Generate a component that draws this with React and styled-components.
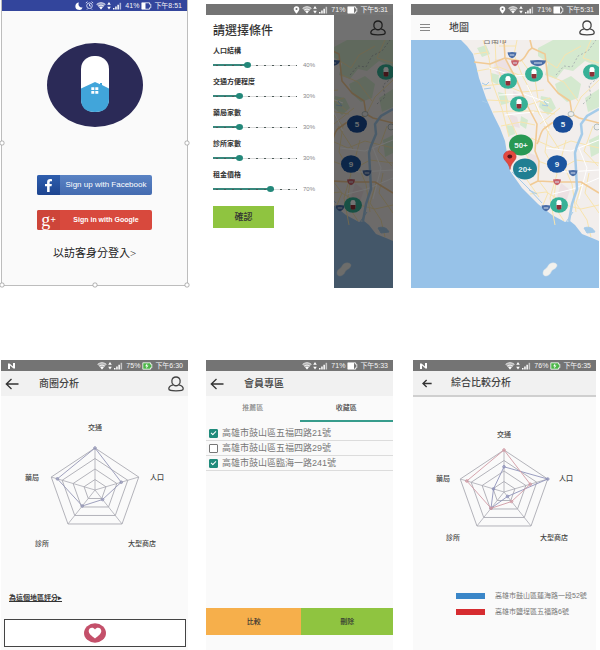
import React, { useState } from "react";
import styled, { createGlobalStyle } from "styled-components";
import { FaFacebookF } from "react-icons/fa";

const GlobalStyle = createGlobalStyle`
  *, *::before, *::after { box-sizing: border-box; }
  body {
    margin: 0;
    background: #fff;
    color: #333;
    font-family: "Liberation Sans", "Noto Sans CJK TC", sans-serif;
    font-size: 7px;
    line-height: 10px;
  }
  button, input { font: inherit; color: inherit; }
  button { margin: 0; padding: 0; border: 0; background: none; cursor: pointer; }
  svg { display: block; }
`;

const Board = styled.main`
  display: grid;
  grid-template-columns: minmax(0, 187fr) minmax(0, 187fr) minmax(0, 188fr);
  grid-template-rows: auto 1fr;
  gap: 72px 18px;
  min-height: 100vh;
  padding: 0 1px;
`;

const Screen = styled.section`
  display: flex;
  flex-direction: column;
  margin: ${(p) => p.$margin || "0"};
  background: #fafafa;
`;

const Bar = styled.div`
  display: flex;
  align-items: center;
  gap: 2px;
  height: 11px;
  padding: 0 5px 0 6px;
  background: ${(p) => p.$color || "#747474"};
  color: #f4f4f4;
  white-space: nowrap;
`;

const BarSpacer = styled.span`
  flex: 1;
`;

const Header = styled.header`
  display: grid;
  grid-template-columns: 38px 1fr auto;
  align-items: center;
  height: ${(p) => (p.$ruled ? "26px" : "25px")};
  padding-right: 4px;
  background: ${(p) => p.$color || "#f1f1f1"};
  border-bottom: ${(p) => (p.$ruled ? "2px solid #cfcfcf" : "0")};
`;

const Lead = styled.button`
  display: flex;
  padding-left: ${(p) => (p.$inset ? "9px" : "4px")};
`;

const Title = styled.h2`
  margin: 0;
  font-size: 10px;
  line-height: 14px;
  font-weight: 500;
  color: #444;
`;

const Body = styled.div`
  display: flex;
  flex-direction: column;
  flex: 1;
`;

/* Status bar */

const Moon = () => (
  <svg width="8" height="8" viewBox="0 0 8 8"><path d="M4 .5A3.7 3.7 0 1 0 7.6 5.400A3.300 3.300 0 0 1 4 .5Z" fill="#fff" /></svg>
);
const Alarm = () => (
  <svg width="9" height="9" viewBox="0 0 9 9" fill="none" stroke="#cfd6f2" strokeWidth="1">
    <circle cx="4.500" cy="4.700" r="2.800" /><path d="M4.500 3v2h1.500M.8 2 2.500.7M8.200 2 6.500.7M2 8.500l1-1M7 8.500l-1-1" />
  </svg>
);
const Place = () => (
  <svg width="7" height="8" viewBox="0 0 7 8"><path d="M3.500.3C1.700.3.7 1.500.7 3c0 1.800 2.800 4.700 2.800 4.700S6.300 4.800 6.300 3C6.300 1.500 5.300.3 3.500.3Zm0 1.800a1 1 0 1 1 0 2 1 1 0 0 1 0-2Z" fill="#fff" fillRule="evenodd" /></svg>
);
const Network = () => (
  <svg width="27" height="8" viewBox="0 0 27 8">
    <path d="M.5 2.400Q5 -1 9.500 2.400L5 7.600Z" fill="#fff" opacity=".45" />
    <path d="M.6 2.300Q5 -.9 9.400 2.300M2.200 4Q5 2 7.800 4" fill="none" stroke="#fff" strokeWidth=".8" />
    <path d="M3.300 5.300Q5 4.200 6.700 5.300L5 7.500Z" fill="#fff" />
    <path d="m13 0 1.800 2.800h-3.600ZM13 7.500l1.800-2.800h-3.600Z" fill="#fff" />
    <path d="M17 7.500V6h1.500v1.500ZM19.200 7.500v-3h1.500v3ZM21.400 7.500V2.700h1.500v4.800Z" fill="#fff" />
    <path d="M23.600 7.500V.8h1.500v6.700Z" fill="#fff" opacity=".6" />
  </svg>
);
const Battery = ({ charging, low }) => (
  <svg width="11" height="8" viewBox="0 0 11 8">
    <path d="M.8.800h7.700v1.400h1.300v3.600H8.500v1.400H.8Z" fill={charging ? "#4cb648" : "none"} stroke="#fff" strokeWidth=".8" />
    {charging ? <path d="m5.300 1.200-2.200 3h1.500l-.5 2.600 2.400-3.300H5Z" fill="#fff" /> : <path d={low ? "M1 1h3.500v6H1Z" : "M1 1h6v6H1Z"} fill="#fff" />}
  </svg>
);
const NLogo = () => (
  <svg width="9" height="8" viewBox="0 0 9 8"><path d="M1 7V1.500h1.500l3.500 3V1h2v5.500H6.500l-3.500-3V7Z" fill="#fff" /></svg>
);

function StatusBar({ level, time, color, brand, charging, low, children }) {
  return (
    <Bar $color={color}>
      {brand && <NLogo />}
      <BarSpacer />
      {children}
      <Network />
      <span>{level}</span>
      <Battery charging={charging} low={low} />
      <span>{time}</span>
    </Bar>
  );
}

/* Header icons */

const User = () => (
  <svg width="16" height="16" viewBox="0 0 16 16" fill="none" stroke="#444" strokeWidth="1.300">
    <path d="M5.400 8.700C3.900 7.300 3.600 5.700 3.900 4.300 4.300 2.200 5.900 1 8 1s3.700 1.200 4.100 3.300c.3 1.400 0 3-1.500 4.400C9 10 7 10 5.400 8.700Z" />
    <path d="M5.200 8.900C2.200 9.600.8 11 .8 12.800c0 1.700 1.700 2 7.200 2s7.200-.3 7.200-2c0-1.800-1.400-3.200-4.400-3.900" />
  </svg>
);
const Back = ({ small }) => (
  <svg width={small ? 10 : 14} height={small ? 9 : 12} viewBox="0 0 14 12" fill="none" stroke="#333" strokeWidth={small ? 1.900 : 1.300}>
    <path d="M13.500 6H1.500M6.500 1 1.300 6l5.200 5" />
  </svg>
);
const Menu = () => (
  <svg width="10" height="9" viewBox="0 0 10 9"><path d="M0 1.500h10M0 4.500h10M0 7.500h10" stroke="#888" strokeWidth="1" /></svg>
);

/* Login */

const LoginScreen = styled(Screen)`
  position: relative;
  border: 1px solid #bdbdbd;
  border-top: 0;
  align-self: start;
`;
const LoginBody = styled(Body)`
  align-items: center;
  padding: 32px 0 24px;
`;
const Handle = styled.span`
  position: absolute;
  width: 5px;
  height: 5px;
  border: 1px solid #aaa;
  border-radius: 2px;
  background: #fff;
  transform: translate(-50%, -50%);
  left: ${(p) => p.$x};
  top: ${(p) => p.$y};
`;
const LogoArt = styled.svg`
  margin-bottom: 48px;
`;
const SocialButton = styled.button`
  display: grid;
  grid-template-columns: 23px 1fr;
  align-items: stretch;
  width: 115px;
  height: 20px;
  margin-bottom: 15px;
  overflow: hidden;
  border-radius: 2px;
  background: ${(p) => p.$color};
  color: #fff;
  font-size: ${(p) => p.$size};
  font-weight: ${(p) => p.$weight || 400};
  line-height: 20px;
`;
const SocialMark = styled.span`
  display: flex;
  align-items: center;
  justify-content: center;
  background: ${(p) => p.$color};
  font-family: "Liberation Serif", serif;
  font-size: 18px;
  font-weight: 400;
  line-height: 14px;
`;
const MarkPlus = styled.small`
  font-size: 10px;
  font-weight: 700;
`;
const GuestLink = styled.a`
  color: #222;
  font-family: "Liberation Serif", "Noto Sans CJK TC", serif;
  font-size: 11px;
  line-height: 16px;
  text-decoration: none;
`;

function Login() {
  return (
    <LoginScreen>
      <StatusBar level="41%" time="下午8:51" color="#33459c" low><Moon /><Alarm /></StatusBar>
      <LoginBody>
        <LogoArt width="96" height="84" viewBox="0 0 96 84" role="img" aria-label="Logo">
          <ellipse cx="48" cy="42" rx="48" ry="42" fill="#2b2a57" />
          <rect x="34" y="13" width="28" height="56" rx="13" fill="#fff" />
          <path d="M34 45.500 48 39l5 2.200V40h2v2l7 3.500V56c0 9-5 13-14 13s-14-4-14-13Z" fill="#41a5da" />
          <path d="M44.300 44.300h3v2.700h-3Zm4 0h3v2.700h-3Zm-4 3.700h3v2.700h-3Zm4 0h3v2.700h-3Z" fill="#fff" />
        </LogoArt>
        <SocialButton type="button" $color="linear-gradient(#5a83c4, #446bb0)" $size="8px">
          <SocialMark $color="linear-gradient(#2f5fae, #1d448f)"><FaFacebookF size={13} /></SocialMark>
          <span>Sign up with Facebook</span>
        </SocialButton>
        <SocialButton type="button" $color="#d8493d" $size="7px" $weight="700">
          <SocialMark $color="#cd4539" aria-hidden="true">g<MarkPlus>+</MarkPlus></SocialMark>
          <span>Sign in with Google</span>
        </SocialButton>
        <GuestLink href="#guest">以訪客身分登入&gt;</GuestLink>
      </LoginBody>
      <Handle $x="0" $y="50%" />
      <Handle $x="100%" $y="50%" />
      <Handle $x="50%" $y="100%" />
      <Handle $x="0" $y="100%" />
      <Handle $x="100%" $y="100%" />
    </LoginScreen>
  );
}

/* Map */

const MapArt = styled.svg`
  width: 100%;
  height: auto;
  font-family: "Liberation Sans", "Noto Sans CJK TC", sans-serif;
`;

const Capsule = ({ x, y }) => (
  <g transform={`translate(${x} ${y})`}>
    <ellipse rx="9" ry="7.800" fill="#37b197" />
    <rect x="-2.500" y="-5" width="5" height="9.500" rx="2.300" fill="#fff" />
    <path d="M-2.500 0h5v2.200a2.400 2.400 0 0 1-5 0Z" fill="#8e3138" />
  </g>
);
const Cluster = ({ x, y, r, color, label }) => (
  <g transform={`translate(${x} ${y})`}>
    <ellipse rx={r} ry={r * 0.87} fill={color} />
    <text y="3" textAnchor="middle" fontSize="8" fontWeight="700" fill="#e8f3f5">{label}</text>
  </g>
);
const Shield = ({ x, y, w = 9, color = "#4a6ea8" }) => (
  <g transform={`translate(${x} ${y})`}>
    <path d={`M${-w / 2}-2.500Q0-3.500 ${w / 2}-2.500Q${w / 2 - 0.5} 2 0 3.200Q${-w / 2 + 0.5} 2 ${-w / 2}-2.500Z`} fill={color} />
    <path d={`M${-w / 4} 0H${w / 4}`} stroke="#d8e0ee" strokeWidth="1" />
  </g>
);

/* `east` shows only the strip of the map right of x = 129 */
function CityMap({ east }) {
  return (
    <MapArt viewBox={east ? "129 0 59 248" : "0 0 188 248"} role="img" aria-label="地圖">
      <rect width="188" height="248" fill="#97c2e8" />
      <path d="M50 0 56 6 62 14 65 25 68 38 75 58 82 74 89 88 94 101 96 113 99 131 111 148 127 164 141 175 154 182 159 181 164 185 171 194 181 198 188 201V0Z" fill="#f2eeec" />
      <g fill="#d4e9cf">
        <path d="M127 8 142 0h46v27l-14-6-12 10-9-2-8 10-11-4 3-12-10-7Z" />
        <path d="M144 44l16-8 10 8-3 14-11 4-9-8ZM130 56l10 2 5 10-8 7-9-8ZM174 58l14-9v18l-11 5ZM66 8l9-3 4 9-8 3ZM80 33l8 2-1 10-7-4ZM87 52l8 2 3 9-8 2ZM178 100l10-5v18l-8 4ZM110 76l7 4-2 9-6-4ZM95 85l8 1 1 8-6 2Z" />
      </g>
      <g fill="#ebdce0" opacity=".7"><path d="M84 19l12 1 6 12-10 7-9-9ZM102 51l11 5-1 12-9-5ZM116 112l10 4 3 11-9 5ZM98 74l8 3 3 11-8-2ZM150 143l9 7-4 12-9-5Z" /></g>
      <g fill="none" stroke="#f8e4ae" strokeWidth="1">
        <path d="M72 0l6 18 3 24 10 27 7 28M84 0l1 23 9 25 2 25 14 31 10 20M66 31l22-4 20 8 15 0M71 46l20-2 20 8 22-2M76 60l21 1 20 4 22-7M82 72l20-1 21 0 21 3M90 86l20-4 14 3M106 0l-3 15 8 20 8 15 9 24 10 12-4 26 12 22-7 24 5 27M111 21l13 18 3 20 15 12M132 19l14 9 8-13 16-9M137 35l16 7 14 19M120 98l23 10 17-7 28 7M127 121l22 8 16-9 23 3M128 141l9 12-5 12M145 142l-3 22 11 17M150 164l20 5 18-4M171 143l-6 20 11 17 4 17M182 86l-9 25 14 15M178 133l-4 20 14 20M133 86l15 23M149 68l-20 16M114 137l14 20M155 100l-5 19 11 25 4 28M88 6l17 0M63 14l14-2M119 154l16-2 19 11M188 40l-18 17-8 16M180 0l-8 18 16 5" />
      </g>
      <g fill="none" stroke="#fff" strokeWidth="1">
        <path d="M78 28l26 8 21-2M88 55l25-1 25 9M94 75l29-3M135 108l25 3 28-11M139 129l16 3 33-2M142 154l20-5 26-11M116 45l22 46M168 108l8 20-8 31" />
      </g>
      <g fill="none" stroke="#f1ca95" strokeWidth="1.600" strokeLinejoin="round">
        <path d="M63 22 79 24 94 18 109 21C116 18 115 11 121 8L119 0M121 8 134 14 137 41 147 53 159 61 161 74 168 78 188 83M93 0 94 18 106 41 117 67 126 84 124 111 128 121 127 141M119 145 127 141 146 142 170 142 188 153M126 104C129 100 129 90 134 88L141 83 160 76" />
      </g>
      <g fill="none" stroke="#a5cbe9">
        <path strokeWidth="2.500" d="M188 69 176 76 170 84 171 94 166 106 164 113 165 130 166 149 161 164 158 181" />
        <path strokeWidth="1" d="M71 43l4 2 3-3M77 63l-6-2M80 48l-7 1M101 132l17 17 13 14M118 150l8 4M155 182l7-10M133 61l4 5-6-1" />
        <path d="M173 188c5-2 9 0 11 4l-8 1Z" fill="#a5cbe9" />
      </g>
      <path d="M145 35l8-9 8 1 6-11 10-5 8-11M172 64l8-7-2-12 10-8" fill="none" stroke="#a3a9ad" strokeWidth=".8" strokeDasharray="2 2" />
      <path d="M132 233c0-4 4-4 5-7 2-4 8-4 9-1 0 4-5 4-6 7-1 4-8 6-8 1Z" fill="#f2f1ed" stroke="#dfe5e8" strokeWidth=".5" />
      <ellipse cx="160" cy="74" rx="3" ry="2.500" fill="#eee" stroke="#9aa" strokeWidth=".7" />
      <ellipse cx="186" cy="87" rx="3" ry="3" fill="#eee" stroke="#9aa" strokeWidth=".7" />
      <Shield x={127} y={23} w={16} />
      <Shield x={162} y={133} />
      <Shield x={146} y={142} color="#c9626a" w={8} />
      <Shield x={135} y={168} />
      <Capsule x={181} y={32} />
      <Capsule x={148} y={165} />
      <Cluster x={152} y={84} r={10} color="#194c98" label="5" />
      <Cluster x={146} y={124} r={10} color="#1b559f" label="9" />
      {!east && (
        <>
          <text x="72" y="3" fontSize="8" fill="#6f6f6f">台南市</text>
          <Shield x={101} y={15} />
          <Shield x={104} y={23} color="#c9626a" w={8} />
          <Capsule x={97} y={41} />
          <Capsule x={123} y={34} />
          <Capsule x={108} y={64} />
          <Cluster x={110} y={105} r={12} color="#289853" label="50+" />
          <Cluster x={114} y={129} r={12} color="#217f92" label="20+" />
          <path d="M99 129.500C98 122 92.500 121 92.500 116.500a6.300 5.800 0 0 1 12.600 0C105.100 121 100 122 99 129.500Z" fill="#e2493f" stroke="#c23b35" strokeWidth=".6" />
          <ellipse cx="98.800" cy="116.500" rx="2.400" ry="2" fill="#57141a" />
        </>
      )}
    </MapArt>
  );
}

/* Filter drawer */

const Split = styled.div`
  display: grid;
  grid-template-columns: minmax(0, 128fr) minmax(0, 59fr);
  flex: 1;
`;
const DimmedPane = styled.div`
  position: relative;
`;
const DimmedHeader = styled.div`
  display: flex;
  align-items: center;
  justify-content: flex-end;
  height: 25px;
  padding-right: 7px;
  background: #fafafa;
`;
const Scrim = styled.div`
  position: absolute;
  inset: 0;
  background: rgba(0, 0, 0, 0.55);
`;
const Drawer = styled.form`
  padding: 7px 7px 0;
  background: #fff;
`;
const DrawerTitle = styled.h2`
  margin: 0 0 6px;
  font-size: 12px;
  line-height: 18px;
  font-weight: 500;
  color: #333;
`;
const Field = styled.div`
  display: grid;
  grid-template-columns: 84px 1fr;
  column-gap: 6px;
  height: 31px;
  align-content: start;
  align-items: center;
`;
const FieldLabel = styled.label`
  grid-column: 1 / -1;
  font-weight: 700;
  color: #333;
  line-height: 10px;
  margin-bottom: 5px;
`;
const Slider = styled.input`
  appearance: none;
  width: 100%;
  height: 8px;
  margin: 0;
  background:
    radial-gradient(circle, #4c5a58 0 1px, transparent 1px) 0 50% / 8px 3px repeat-x,
    linear-gradient(#38887d, #38887d) 0 50% / ${(p) => p.$fill}% 2px no-repeat,
    linear-gradient(#dcdcdc, #dcdcdc) 0 50% / 100% 1px no-repeat;
  &::-webkit-slider-thumb {
    appearance: none;
    width: 7px;
    height: 6px;
    border-radius: 50%;
    background: #23887a;
  }
`;
const Percent = styled.output`
  font-size: 6px;
  line-height: 8px;
  color: #888;
`;
const Confirm = styled.button`
  width: 61px;
  height: 22px;
  margin-top: 5px;
  background: #8fc440;
  color: #333;
  font-size: 9px;
  font-weight: 500;
  line-height: 22px;
`;

const FILTERS = [
  ["people", "人口結構", 40],
  ["traffic", "交通方便程度", 30],
  ["pharmacy", "藥局家數", 30],
  ["clinic", "診所家數", 30],
  ["rent", "租金價格", 70],
];

function FilterField({ id, label, start }) {
  const [value, setValue] = useState(start);
  return (
    <Field>
      <FieldLabel htmlFor={id}>{label}</FieldLabel>
      <Slider id={id} type="range" min="0" max="100" step="10" value={value} $fill={value} onChange={(e) => setValue(Number(e.target.value))} />
      <Percent htmlFor={id}>{value}%</Percent>
    </Field>
  );
}

function Filter() {
  return (
    <Screen $margin="4px 0 0">
      <StatusBar level="71%" time="下午5:31"><Place /></StatusBar>
      <Split>
        <Drawer onSubmit={(e) => e.preventDefault()}>
          <DrawerTitle>請選擇條件</DrawerTitle>
          {FILTERS.map(([id, label, start]) => <FilterField key={id} id={id} label={label} start={start} />)}
          <Confirm type="submit">確認</Confirm>
        </Drawer>
        <DimmedPane>
          <DimmedHeader><User /></DimmedHeader>
          <CityMap east />
          <Scrim />
        </DimmedPane>
      </Split>
    </Screen>
  );
}

function MapScreen() {
  return (
    <Screen $margin="4px 0 0">
      <StatusBar level="71%" time="下午5:31"><Place /></StatusBar>
      <Header $color="#fafafa">
        <Lead type="button" $inset aria-label="選單"><Menu /></Lead>
        <Title>地圖</Title>
        <button type="button" aria-label="會員"><User /></button>
      </Header>
      <CityMap />
    </Screen>
  );
}

/* Radar chart */

const RadarArt = styled.svg`
  width: 100%;
  height: auto;
  font-family: "Liberation Sans", "Noto Sans CJK TC", sans-serif;
`;
const AXES = [0, 1, 2, 3, 4].map((i) => {
  const angle = ((i * 72 - 90) * Math.PI) / 180;
  return [Math.cos(angle) * 46, Math.sin(angle) * 42];
});
const shape = (values) => AXES.map(([x, y], i) => `${x * values[i]},${y * values[i]}`).join(" ");

function Radar({ width, cx, cy, labels, series }) {
  return (
    <RadarArt viewBox={`0 0 ${width} 160`} role="img" aria-label="分析圖">
      <g transform={`translate(${cx} ${cy})`} fill="none">
        {[0.25, 0.5, 0.75, 1].map((s) => <polygon key={s} points={shape([s, s, s, s, s])} stroke="#aaaab2" strokeWidth=".9" />)}
        {AXES.map(([x, y], i) => <path key={i} d={`M0 0L${x} ${y}`} stroke="#aaaab2" strokeWidth=".8" />)}
        {series.map(({ color, values }) => (
          <g key={color} stroke={color} strokeWidth=".9">
            <polygon points={shape(values)} />
            {AXES.map(([x, y], i) => <circle key={i} cx={x * values[i]} cy={y * values[i]} r="1.300" fill={color} fillOpacity=".5" />)}
          </g>
        ))}
      </g>
      {labels.map(([text, x, y]) => <text key={text} x={x} y={y + 3} textAnchor="middle" fontSize="7" fontWeight="500" fill="#444">{text}</text>)}
    </RadarArt>
  );
}

/* District analysis */

const RateLink = styled.a`
  align-self: flex-start;
  margin: auto 0 16px 8px;
  color: #333;
  font-weight: 700;
  text-decoration: underline;
`;
const LikeButton = styled.button`
  display: flex;
  align-items: center;
  justify-content: center;
  height: 28px;
  margin: 0 2px 3px 3px;
  border: 1px solid #444;
  background: #fff;
`;

function Analysis() {
  return (
    <Screen>
      <StatusBar level="75%" time="下午6:30" brand charging />
      <Header>
        <Lead type="button" aria-label="返回"><Back /></Lead>
        <Title>商圈分析</Title>
        <button type="button" aria-label="會員"><User /></button>
      </Header>
      <Body>
        <Radar
          width={187} cx={94} cy={94}
          labels={[["交通", 94, 31], ["人口", 156, 81], ["藥局", 31, 81], ["診所", 41, 147], ["大型商店", 141, 147]]}
          series={[{ color: "#9496b6", values: [1, 0.6, 0.28, 0.47, 0.86] }]}
        />
        <RateLink href="#rate">為這個地區評分▸</RateLink>
        <LikeButton type="button" aria-label="喜歡">
          <svg width="22" height="20" viewBox="0 0 22 20">
            <ellipse cx="11" cy="10" rx="11" ry="9.700" fill="#c4506a" />
            <path d="M11 15.500C8 13 4.700 11 4.700 8c0-3.600 4.600-4.500 6.300-1.500C12.700 3.500 17.300 4.400 17.300 8c0 3-3.300 5-6.300 7.500Z" fill="#fff" />
          </svg>
        </LikeButton>
      </Body>
    </Screen>
  );
}

/* Member area */

const Tabs = styled.div`
  display: grid;
  grid-template-columns: 1fr 1fr;
  margin-bottom: 4px;
`;
const Tab = styled.button`
  height: 26px;
  border-bottom: 2px solid ${(p) => (p.$active ? "#379c8c" : "transparent")};
  color: ${(p) => (p.$active ? "#444" : "#888")};
  font-weight: 500;
`;
const Address = styled.label`
  display: flex;
  align-items: center;
  gap: 4px;
  height: 15px;
  padding-left: 3px;
  border-bottom: 1px solid #dcdcdc;
  color: #777;
  font-size: 9px;
  line-height: 14px;
  white-space: nowrap;
`;
const Check = styled.input`
  appearance: none;
  flex: none;
  width: 9px;
  height: 9px;
  margin: 0;
  border: 1px solid #777;
  border-radius: 1px;
  background: #fff;
  &:checked {
    border-color: #208b7c;
    background: #208b7c;
  }
  &:checked::after {
    content: "";
    display: block;
    width: 5px;
    height: 3px;
    margin: 1px;
    border: solid #fff;
    border-width: 0 0 1px 1px;
    transform: rotate(-45deg);
  }
`;
const Actions = styled.div`
  display: grid;
  grid-template-columns: 51fr 49fr;
  margin: auto 0 15px;
`;
const Action = styled.button`
  height: 27px;
  background: ${(p) => p.$color};
  color: #333;
  font-weight: 500;
`;

function Members() {
  return (
    <Screen>
      <StatusBar level="71%" time="下午5:33" />
      <Header>
        <Lead type="button" aria-label="返回"><Back /></Lead>
        <Title>會員專區</Title>
      </Header>
      <Body>
        <Tabs role="tablist">
          <Tab type="button" role="tab" aria-selected="false">推薦區</Tab>
          <Tab type="button" role="tab" aria-selected="true" $active>收藏區</Tab>
        </Tabs>
        <Address><Check type="checkbox" defaultChecked />高雄市鼓山區五福四路21號</Address>
        <Address><Check type="checkbox" />高雄市鼓山區五福四路29號</Address>
        <Address><Check type="checkbox" defaultChecked />高雄市鼓山區臨海一路241號</Address>
        <Actions>
          <Action type="button" $color="#f6af4b">比較</Action>
          <Action type="button" $color="#8fc440">刪除</Action>
        </Actions>
      </Body>
    </Screen>
  );
}

/* Comparison */

const Legend = styled.ul`
  display: flex;
  flex-direction: column;
  gap: 6px;
  margin: 34px 0 0;
  padding: 0 0 0 43px;
  list-style: none;
`;
const LegendItem = styled.li`
  display: flex;
  align-items: center;
  gap: 10px;
  color: #777;
  white-space: nowrap;
  &::before {
    content: "";
    width: 29px;
    height: 6px;
    background: ${(p) => p.$color};
  }
`;

function Compare() {
  return (
    <Screen $margin="0 3px 0 2px">
      <StatusBar level="76%" time="下午6:35" brand charging />
      <Header $ruled>
        <Lead type="button" $inset aria-label="返回"><Back small /></Lead>
        <Title>綜合比較分析</Title>
      </Header>
      <Body>
        <Radar
          width={183} cx={91} cy={95}
          labels={[["交通", 91, 37], ["人口", 153, 81], ["藥局", 30, 81], ["診所", 40, 140], ["大型商店", 141, 140]]}
          series={[
            { color: "#9093ba", values: [0.6, 1, 0.13, 0.48, 0.24] },
            { color: "#d09aa4", values: [1, 0.6, 0.28, 0.48, 0.85] },
          ]}
        />
        <Legend>
          <LegendItem $color="#3a86c8">高雄市鼓山區蓮海路一段52號</LegendItem>
          <LegendItem $color="#d62c30">高雄市鹽埕區五福路6號</LegendItem>
        </Legend>
      </Body>
    </Screen>
  );
}

export default function App() {
  return (
    <>
      <GlobalStyle />
      <Board>
        <Login />
        <Filter />
        <MapScreen />
        <Analysis />
        <Members />
        <Compare />
      </Board>
    </>
  );
}
